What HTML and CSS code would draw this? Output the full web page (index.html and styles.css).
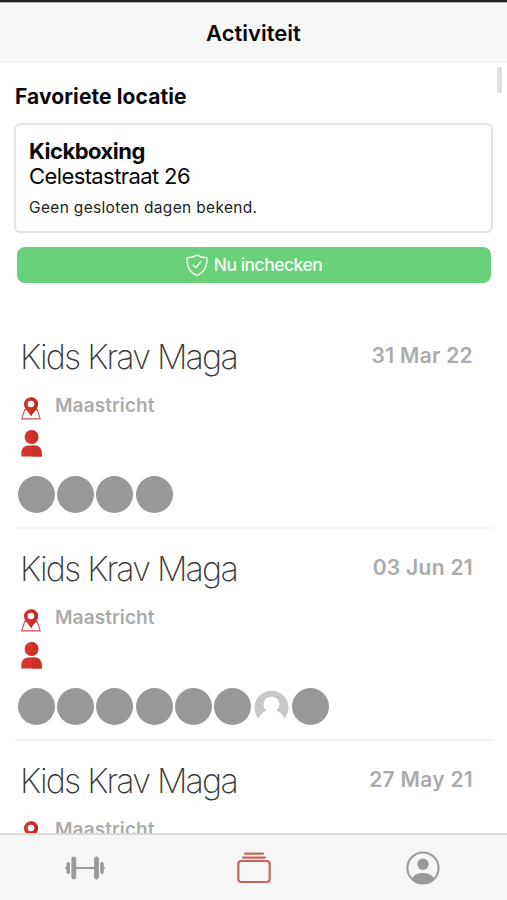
FILE: index.html
```html
<!DOCTYPE html>
<html lang="nl">
<head>
<meta charset="utf-8">
<title>Activiteit</title>
<link rel="stylesheet" href="styles.css">
</head>
<body>
<svg width="0" height="0" class="defs">
  <symbol id="pin" viewBox="0 0 20 23">
    <path d="M5 12.6H3.7L.8 21.9h18.4l-2.9-9.3H15" fill="none" stroke="#dc4a48" stroke-width="1.1"/>
    <path d="M10 .2a7 7 0 0 0-7 7c0 4.500 4 6.800 7 12 3-5.200 7-7.500 7-12a7 7 0 0 0-7-7z" fill="#d6312c"/>
    <path d="M10 .2a7 7 0 0 1 7 7c0 4.500-4 6.800-7 12z" fill="#c42b27"/>
    <circle cx="10" cy="7" r="3.300" fill="#fff"/>
  </symbol>
  <symbol id="person" viewBox="0 0 20 27">
    <circle cx="10" cy="7" r="6.900" fill="#d6342d"/>
    <path d="M-.2 26.500v-3c0-5 3-7.900 7-7.900h6.400c4 0 7 2.900 7 7.900v3z" fill="#d6342d"/>
    <path d="M10 .1a6.900 6.900 0 0 1 0 13.800zM10 15.600h3.200c4 0 7 2.900 7 7.900v3H10z" fill="#c82f29"/>
  </symbol>
</svg>
<div class="app">
  <header class="header"><h1>Activiteit</h1></header>
  <main class="content">
    <section class="favorite">
      <h2>Favoriete locatie</h2>
      <div class="card">
        <strong class="name">Kickboxing</strong>
        <span class="street">Celestastraat 26</span>
        <span class="note">Geen gesloten dagen bekend.</span>
      </div>
      <button class="checkin">
        <svg width="22" height="23" viewBox="0 0 22 23" fill="none" stroke="#e9ffed" stroke-width="1.500" stroke-linejoin="round" stroke-linecap="round"><path d="M11 1C8.300 2.700 4.500 3.700 1 3.800c0 8.700 2.200 14.200 10 17.800 7.800-3.600 10-9.100 10-17.800C17.500 3.700 13.700 2.700 11 1z"/><path d="M7.300 11.200l2.600 2.500 4.900-5.900"/></svg>
        <span>Nu inchecken</span>
      </button>
    </section>
    <article class="item">
      <div class="top"><h3>Kids Krav Maga</h3><time>31 Mar 22</time></div>
      <div class="place"><svg width="20" height="23"><use href="#pin"/></svg><span>Maastricht</span></div>
      <svg class="person" width="21" height="27"><use href="#person"/></svg>
      <div class="people"><i></i><i></i><i></i><i></i></div>
    </article>
    <article class="item">
      <div class="top"><h3>Kids Krav Maga</h3><time>03 Jun 21</time></div>
      <div class="place"><svg width="20" height="23"><use href="#pin"/></svg><span>Maastricht</span></div>
      <svg class="person" width="21" height="27"><use href="#person"/></svg>
      <div class="people"><i></i><i></i><i></i><i></i><i></i><i></i>
        <svg width="37" height="37" viewBox="0 0 37 37"><path d="M5.500 30.600A17 17 0 1 1 31.500 30.600C30 26.500 26.500 23.600 23.300 22.800A8 8 0 1 0 13.700 22.800C10.500 23.600 7 26.500 5.500 30.600z" fill="#c8c8c8"/></svg>
        <i></i></div>
    </article>
    <article class="item">
      <div class="top"><h3>Kids Krav Maga</h3><time>27 May 21</time></div>
      <div class="place"><svg width="20" height="23"><use href="#pin"/></svg><span>Maastricht</span></div>
    </article>
    <span class="scrollbar"></span>
  </main>
  <nav class="tabs">
    <a><svg width="40" height="24" viewBox="0 0 40 24" stroke="#999" stroke-linecap="round"><path d="M9 12h22" stroke-width="2.200"/><path d="M8.800 3v18M31.500 3v18" stroke-width="4.800"/><path d="M3.200 7.700v8.600M37 7.700v8.600" stroke-width="3.500"/><path d="M1 12h1M38 12h1" stroke-width="2"/></svg></a>
    <a><svg width="34" height="34" viewBox="0 0 34 34" fill="none" stroke="#c9645c" stroke-width="2.200" stroke-linecap="round"><rect x="1.300" y="10" width="31.400" height="21" rx="3"/><path d="M6 6.600h22M8 2.600h18" stroke-width="2.200"/></svg></a>
    <a><svg width="34" height="34" viewBox="0 0 34 34"><circle cx="17" cy="17" r="15.600" fill="none" stroke="#999" stroke-width="2"/><circle cx="17" cy="13.300" r="5.700" fill="#999"/><path d="M6 27.200c2.200-3.400 6.200-5.200 11-5.200s8.800 1.800 11 5.200c-2.600 3.600-6.500 5.600-11 5.600S8.600 30.800 6 27.200z" fill="#999"/></svg></a>
  </nav>
</div>
</body>
</html>
```
FILE: styles.css
```css
* { box-sizing: border-box; }
body { margin: 0; font-family: Inter, "Liberation Sans", sans-serif; color: #080808; background: #fff; }
h1, h2, h3 { margin: 0; }
.defs { display: block; }
svg { display: block; flex: none; overflow: visible; }
.app { height: 900px; display: flex; flex-direction: column; overflow: hidden; }
.header { height: 63px; flex: none; border-top: 2px solid #242022; border-bottom: 1px solid #f0f0f0; background: #f6f6f6; box-shadow: inset 0 1px #b0b0b0; text-align: center; }
.header h1 { font-size: 22px; line-height: 27px; font-weight: 600; padding-top: 18px; }
.content { position: relative; height: 770px; flex: none; overflow: hidden; }
.favorite { padding: 20px 14px 0; }
.favorite h2 { font-size: 21px; line-height: 28px; font-weight: 700; letter-spacing: .1px; padding-left: 1px; }
.card { margin-top: 12px; height: 110px; border: 2px solid #e4e4e6; border-radius: 6px; padding: 13px 13px; display: flex; flex-direction: column; }
.name { font-size: 22px; line-height: 26px; font-weight: 700; letter-spacing: -.5px; }
.street { font-size: 22px; line-height: 25px; letter-spacing: -.6px; }
.note { font-size: 15.5px; line-height: 20px; margin-top: 9px; letter-spacing: .33px; color: #222; }
.checkin { margin: 14px 2px 0 3px; width: 474px; height: 36px; padding: 0; border: 0; border-radius: 8px; background: #69d179; color: #f1fff3; font: 500 17.5px/22px Inter, sans-serif; letter-spacing: -.5px; display: flex; align-items: center; justify-content: center; gap: 6px; }
.item { margin: 0 13px 0 15px; height: 212px; padding: 19px 20px 0 6px; border-bottom: 2px solid #f5f5f6; }
.favorite + .item { margin-top: 34px; }
.top { display: flex; justify-content: space-between; }
.item h3 { font-size: 34px; line-height: 42px; font-weight: 200; letter-spacing: -1.8px; margin-left: -1px; color: #3a3a3a; white-space: nowrap; }
.item time { font-size: 21px; line-height: 40px; font-weight: 600; letter-spacing: .3px; margin-right: 1px; color: #ababab; }
.place { display: flex; gap: 14px; margin-top: 19px; height: 23px; }
.place span { font-size: 19px; line-height: 18px; font-weight: 600; letter-spacing: .1px; color: #ababab; }
.person { margin-top: 10px; }
.people { display: flex; gap: 2.200px; margin: 19px 0 0 -3px; }
.people i { width: 37px; height: 37px; border-radius: 50%; background: #989898; }
.scrollbar { position: absolute; right: 5px; top: 4px; width: 5px; height: 26px; background: #e0e0e0; border-radius: 1px; }
.tabs { height: 67px; border-top: 2px solid #dadada; background: #f6f6f6; display: grid; grid-template-columns: repeat(3, 1fr); }
.tabs a { display: flex; justify-content: center; align-items: center; }
```
